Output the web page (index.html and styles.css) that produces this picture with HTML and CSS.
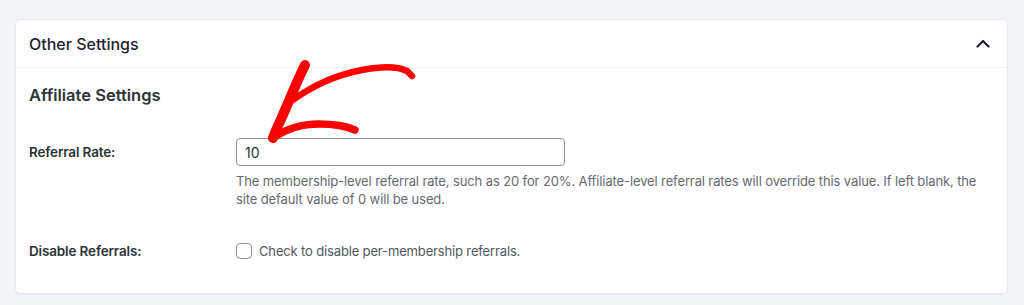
FILE: index.html
```html
<!DOCTYPE html>
<html lang="en">
<head>
<meta charset="utf-8">
<link rel="stylesheet" href="styles.css">
</head>
<body>
<div class="page">
  <section class="card">
    <header class="card-head">
      <h2 class="card-title">Other Settings</h2>
      <svg class="chevron" width="14" height="9" viewBox="0 0 14 9"><path d="M1.5 7.5 L7 2 L12.5 7.5" fill="none" stroke="#1e2330" stroke-width="2.2" stroke-linecap="round" stroke-linejoin="round"/></svg>
    </header>
    <div class="card-body">
      <h3 class="section-title">Affiliate Settings</h3>
      <div class="row row-rate">
        <label class="label" for="rate">Referral Rate:</label>
        <div class="field">
          <input id="rate" class="input" type="text" value="10">
          <p class="desc">The membership-level referral rate, such as 20 for 20%. Affiliate-level referral rates will override this value. If left blank, the site default value of 0 will be used.</p>
        </div>
      </div>
      <div class="row row-disable">
        <span class="label">Disable Referrals:</span>
        <label class="check"><span class="box"></span>Check to disable per-membership referrals.</label>
      </div>
    </div>
    <svg class="arrow" width="160" height="100" viewBox="260 55 160 100">
      <path d="M304 64 C296 80 288 100 281 116 C277 125 274 131 272 137" fill="none" stroke="#f00" stroke-width="10" stroke-linecap="round"/>
      <path d="M289 101 C308 87 334 74 361 69 C382 65 398 66 406 70 L411 75" fill="none" stroke="#f00" stroke-width="6.5" stroke-linecap="round"/>
      <path d="M272 137 C285 128 300 123 318 123 C333 123 345 125 354 129" fill="none" stroke="#f00" stroke-width="7.5" stroke-linecap="round"/>
    </svg>
  </section>
</div>
</body>
</html>
```

FILE: styles.css
```css
* { box-sizing: border-box; }
html, body { margin: 0; padding: 0; }
body {
  background: #f2f4f8;
  font-family: Inter, "Noto Sans", "Liberation Sans", sans-serif;
  color: #2c3338;
}
.page {
  padding: 19px 16px 12px 15px;
}
.card {
  position: relative;
  background: #fff;
  border: 1px solid #e8ebef;
  border-radius: 5px;
  box-shadow: 0 1px 2px rgba(30, 40, 60, 0.06);
  height: 275px;
}
.card-head {
  height: 48px;
  display: flex;
  align-items: center;
  justify-content: space-between;
  padding: 0 17px 0 13px;
  border-bottom: 1px solid #eef0f3;
}
.card-title {
  margin: 0;
  font-size: 16px;
  font-weight: 500;
  color: #1e2330;
  letter-spacing: 0;
}
.chevron { display: block; }
.card-body {
  padding: 15px 13px 0 13px;
}
.section-title {
  margin: 0;
  font-size: 16.5px;
  line-height: 24px;
  font-weight: 600;
  color: #2c3338;
  letter-spacing: 0;
}
.row {
  display: grid;
  grid-template-columns: 207px 1fr;
  align-items: start;
}
.row-rate { margin-top: 31px; }
.label {
  font-size: 13.5px;
  font-weight: 600;
  color: #2c3338;
  line-height: 28px;
  letter-spacing: -0.15px;
}
.input {
  display: block;
  width: 329px;
  height: 28px;
  margin: 0;
  padding: 0 8px;
  border: 1px solid #8c8f94;
  border-radius: 4px;
  font-family: inherit;
  font-size: 14px;
  color: #2c3338;
  background: #fff;
  outline: none;
}
.desc {
  margin: 6px 0 0;
  font-size: 13px;
  line-height: 18px;
  color: #646970;
  max-width: 750px;
  letter-spacing: -0.12px;
}
.row-disable {
  margin-top: 29px;
}
.check {
  display: flex;
  align-items: center;
  gap: 7px;
  font-size: 13px;
  color: #50575e;
  line-height: 28px;
  letter-spacing: -0.15px;
}
.box {
  width: 16px;
  height: 16px;
  border: 1px solid #8c8f94;
  border-radius: 4px;
  background: #fff;
}
.arrow {
  position: absolute;
  left: 245px;
  top: 36px;
  pointer-events: none;
}
```
